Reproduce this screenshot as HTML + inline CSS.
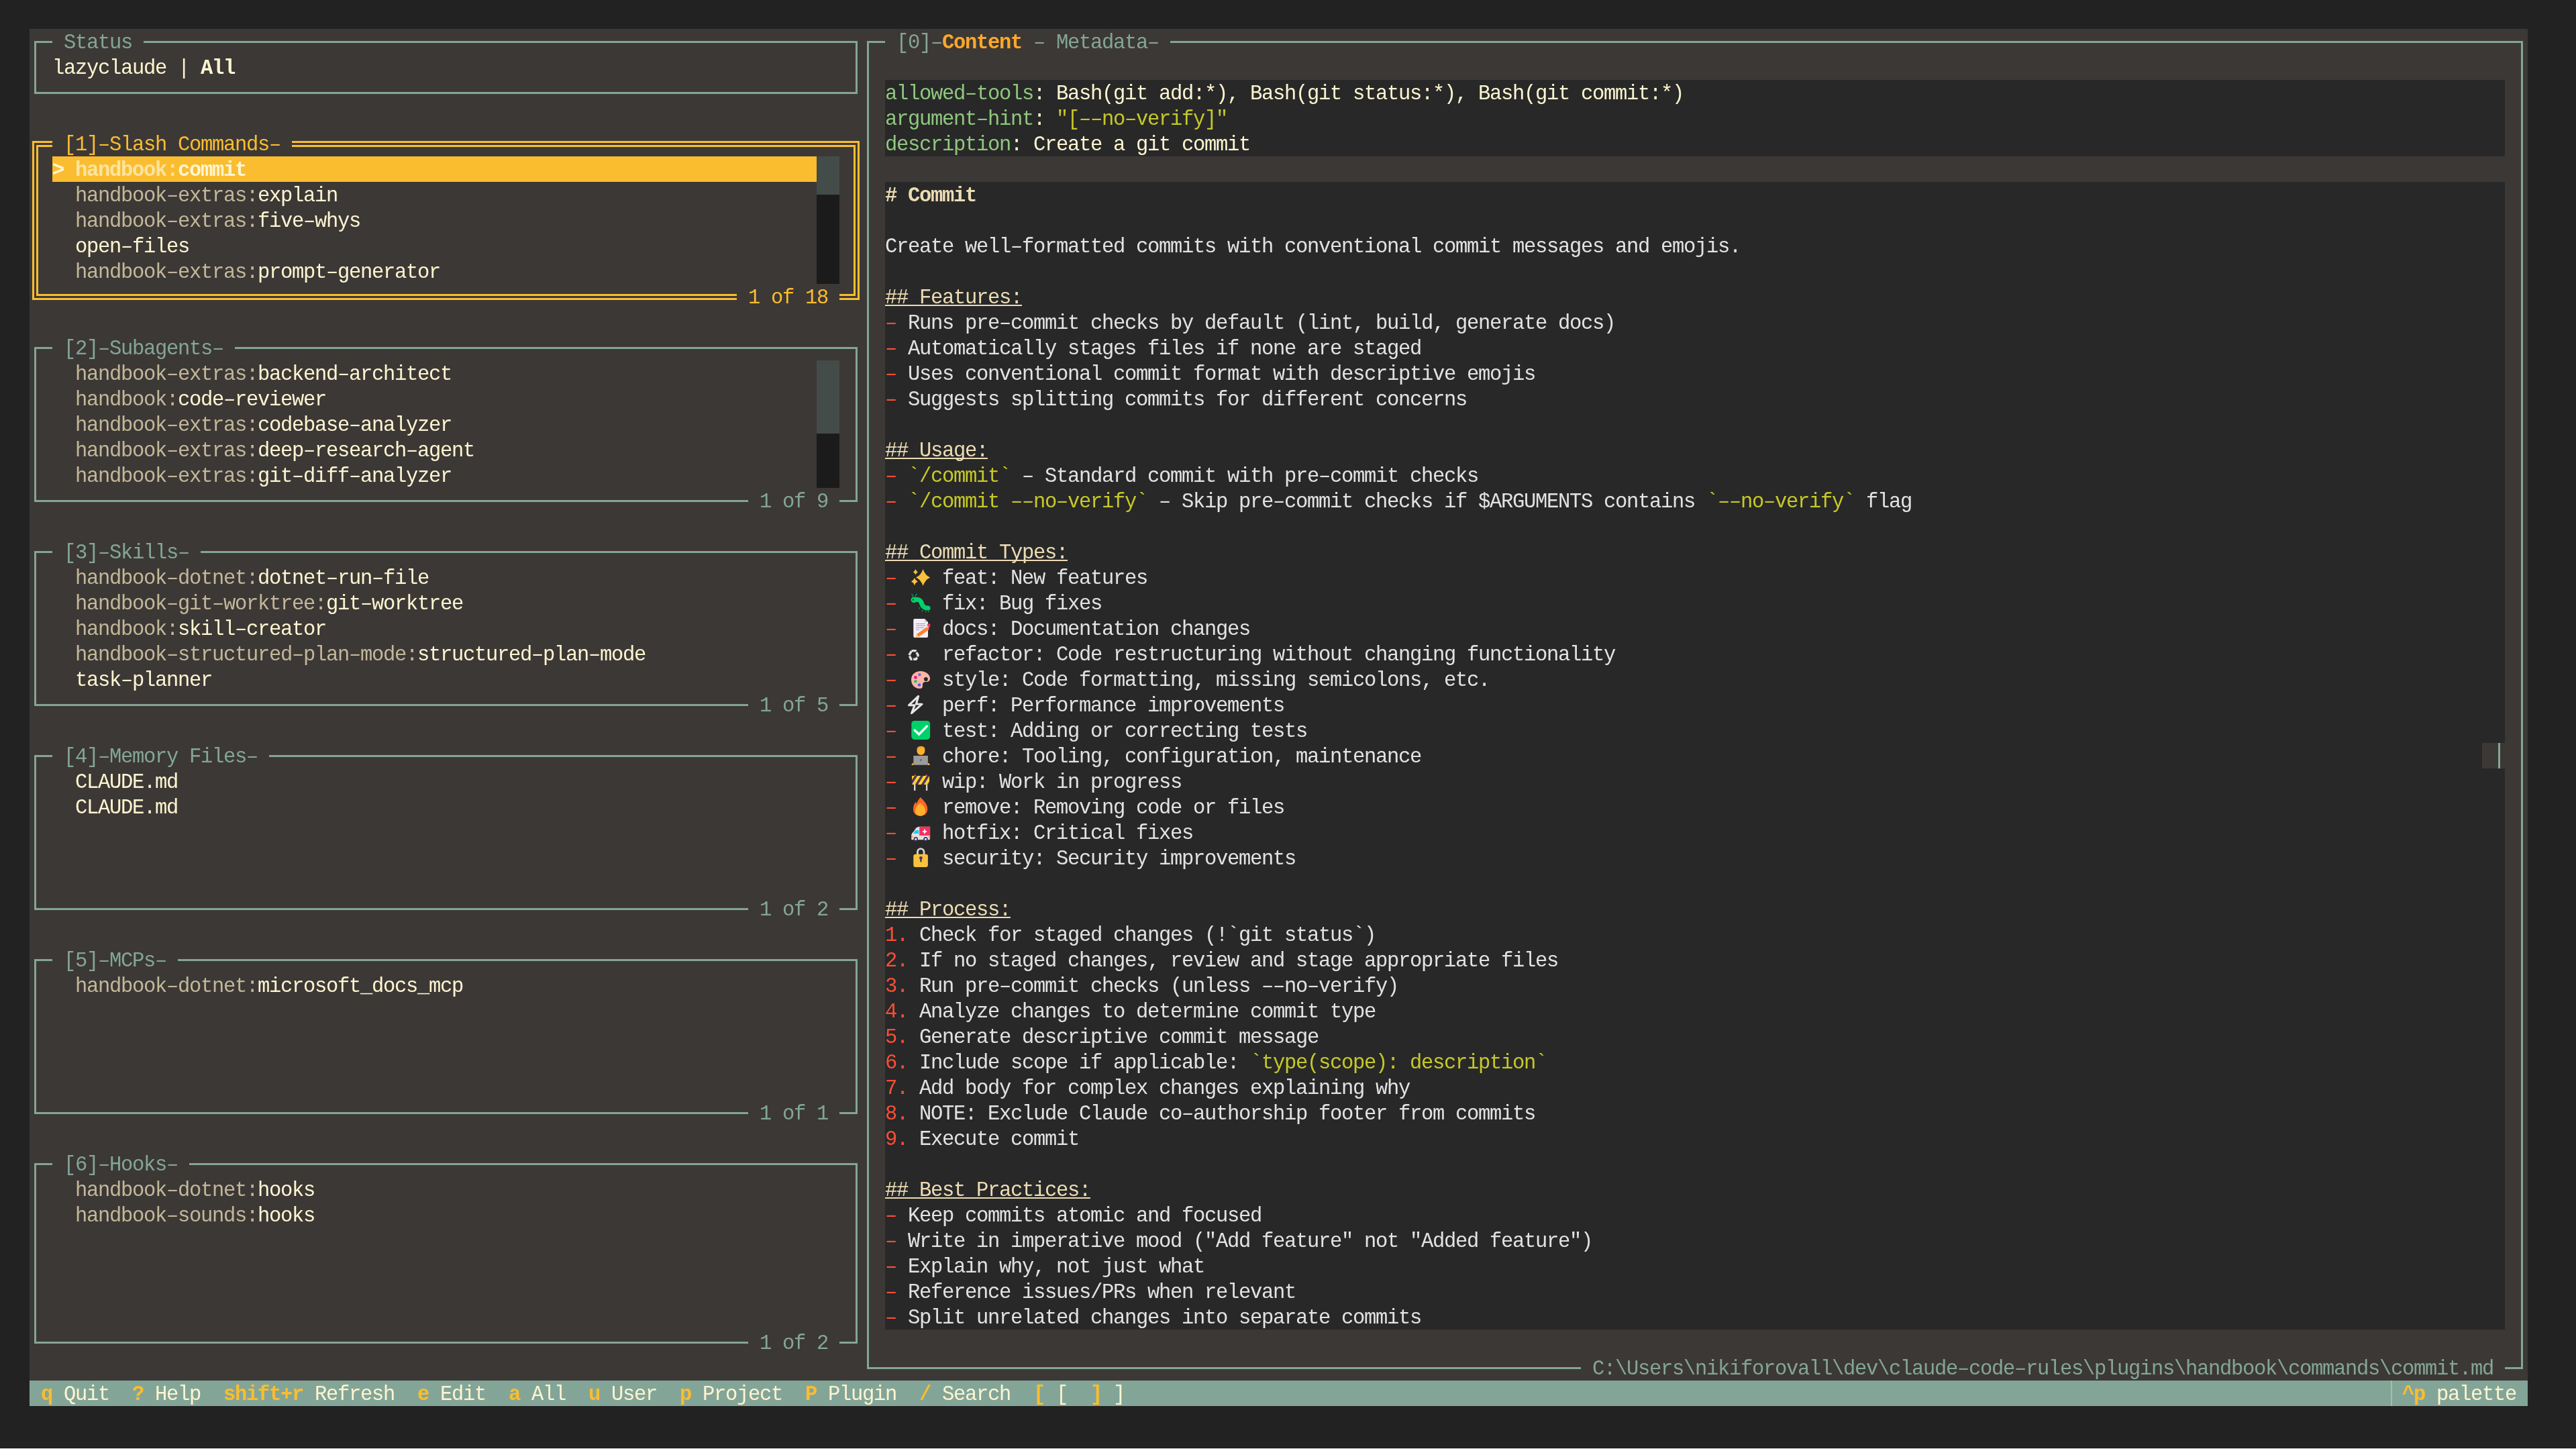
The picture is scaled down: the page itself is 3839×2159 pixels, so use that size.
<!DOCTYPE html>
<html><head><meta charset="utf-8"><style>
html,body{margin:0;padding:0;}
body{width:3839px;height:2159px;background:#222222;position:relative;overflow:hidden;}
div,span,svg{position:absolute;}
.t{will-change:transform;white-space:pre;font-family:"Liberation Mono";font-size:30.5px;line-height:38px;letter-spacing:-1.3027px;}
.b{font-weight:bold;}
</style></head><body>
<div style="left:44px;top:43px;width:3723px;height:2052px;background:#3c3836"></div>
<div style="left:51px;top:61px;width:1221px;height:73px;border:3px solid #83a598"></div>
<div style="left:78px;top:53px;width:136px;height:20px;background:#3c3836"></div>
<span class="t" style="left:95px;top:45px;color:#83a598">Status</span>
<span class="t" style="left:78px;top:83px;color:#fdf5d0">lazyclaude | </span>
<span class="t b" style="left:299px;top:83px;color:#fdf5d0">All</span>
<div style="left:48px;top:210px;width:1227px;height:231px;border:3px solid #fabd2f"></div>
<div style="left:54px;top:216px;width:1215px;height:219px;border:3px solid #fabd2f"></div>
<div style="left:78px;top:205px;width:357px;height:20px;background:#3c3836"></div>
<span class="t" style="left:95px;top:197px;color:#fabd2f">[1]–Slash Commands–</span>
<div style="left:1098px;top:433px;width:153px;height:20px;background:#3c3836"></div>
<span class="t" style="left:1115px;top:425px;color:#fabd2f">1 of 18</span>
<div style="left:78px;top:233px;width:1139px;height:38px;background:#fabd2f"></div>
<div style="left:1217px;top:233px;width:34px;height:190px;background:#1b1b1b"></div>
<div style="left:1217px;top:233px;width:34px;height:57px;background:#434c48"></div>
<span class="t b" style="left:78px;top:235px;color:#fdf5d0">&gt;</span>
<span class="t b" style="left:112px;top:235px;color:#fbe4a0">handbook:</span>
<span class="t b" style="left:265px;top:235px;color:#fdf5d0">commit</span>
<span class="t" style="left:112px;top:273px;color:#c2b798">handbook–extras:</span>
<span class="t" style="left:384px;top:273px;color:#fdf5d0">explain</span>
<span class="t" style="left:112px;top:311px;color:#c2b798">handbook–extras:</span>
<span class="t" style="left:384px;top:311px;color:#fdf5d0">five–whys</span>
<span class="t" style="left:112px;top:349px;color:#fdf5d0">open–files</span>
<span class="t" style="left:112px;top:387px;color:#c2b798">handbook–extras:</span>
<span class="t" style="left:384px;top:387px;color:#fdf5d0">prompt–generator</span>
<div style="left:51px;top:517px;width:1221px;height:225px;border:3px solid #83a598"></div>
<div style="left:78px;top:509px;width:272px;height:20px;background:#3c3836"></div>
<span class="t" style="left:95px;top:501px;color:#83a598">[2]–Subagents–</span>
<div style="left:1115px;top:737px;width:136px;height:20px;background:#3c3836"></div>
<span class="t" style="left:1132px;top:729px;color:#83a598">1 of 9</span>
<div style="left:1217px;top:537px;width:34px;height:190px;background:#1b1b1b"></div>
<div style="left:1217px;top:537px;width:34px;height:109px;background:#434c48"></div>
<span class="t" style="left:112px;top:539px;color:#c2b798">handbook–extras:</span>
<span class="t" style="left:384px;top:539px;color:#fdf5d0">backend–architect</span>
<span class="t" style="left:112px;top:577px;color:#c2b798">handbook:</span>
<span class="t" style="left:265px;top:577px;color:#fdf5d0">code–reviewer</span>
<span class="t" style="left:112px;top:615px;color:#c2b798">handbook–extras:</span>
<span class="t" style="left:384px;top:615px;color:#fdf5d0">codebase–analyzer</span>
<span class="t" style="left:112px;top:653px;color:#c2b798">handbook–extras:</span>
<span class="t" style="left:384px;top:653px;color:#fdf5d0">deep–research–agent</span>
<span class="t" style="left:112px;top:691px;color:#c2b798">handbook–extras:</span>
<span class="t" style="left:384px;top:691px;color:#fdf5d0">git–diff–analyzer</span>
<div style="left:51px;top:821px;width:1221px;height:225px;border:3px solid #83a598"></div>
<div style="left:78px;top:813px;width:221px;height:20px;background:#3c3836"></div>
<span class="t" style="left:95px;top:805px;color:#83a598">[3]–Skills–</span>
<div style="left:1115px;top:1041px;width:136px;height:20px;background:#3c3836"></div>
<span class="t" style="left:1132px;top:1033px;color:#83a598">1 of 5</span>
<span class="t" style="left:112px;top:843px;color:#c2b798">handbook–dotnet:</span>
<span class="t" style="left:384px;top:843px;color:#fdf5d0">dotnet–run–file</span>
<span class="t" style="left:112px;top:881px;color:#c2b798">handbook–git–worktree:</span>
<span class="t" style="left:486px;top:881px;color:#fdf5d0">git–worktree</span>
<span class="t" style="left:112px;top:919px;color:#c2b798">handbook:</span>
<span class="t" style="left:265px;top:919px;color:#fdf5d0">skill–creator</span>
<span class="t" style="left:112px;top:957px;color:#c2b798">handbook–structured–plan–mode:</span>
<span class="t" style="left:622px;top:957px;color:#fdf5d0">structured–plan–mode</span>
<span class="t" style="left:112px;top:995px;color:#fdf5d0">task–planner</span>
<div style="left:51px;top:1125px;width:1221px;height:225px;border:3px solid #83a598"></div>
<div style="left:78px;top:1117px;width:323px;height:20px;background:#3c3836"></div>
<span class="t" style="left:95px;top:1109px;color:#83a598">[4]–Memory Files–</span>
<div style="left:1115px;top:1345px;width:136px;height:20px;background:#3c3836"></div>
<span class="t" style="left:1132px;top:1337px;color:#83a598">1 of 2</span>
<span class="t" style="left:112px;top:1147px;color:#fdf5d0">CLAUDE.md</span>
<span class="t" style="left:112px;top:1185px;color:#fdf5d0">CLAUDE.md</span>
<div style="left:51px;top:1429px;width:1221px;height:225px;border:3px solid #83a598"></div>
<div style="left:78px;top:1421px;width:187px;height:20px;background:#3c3836"></div>
<span class="t" style="left:95px;top:1413px;color:#83a598">[5]–MCPs–</span>
<div style="left:1115px;top:1649px;width:136px;height:20px;background:#3c3836"></div>
<span class="t" style="left:1132px;top:1641px;color:#83a598">1 of 1</span>
<span class="t" style="left:112px;top:1451px;color:#c2b798">handbook–dotnet:</span>
<span class="t" style="left:384px;top:1451px;color:#fdf5d0">microsoft_docs_mcp</span>
<div style="left:51px;top:1733px;width:1221px;height:263px;border:3px solid #83a598"></div>
<div style="left:78px;top:1725px;width:204px;height:20px;background:#3c3836"></div>
<span class="t" style="left:95px;top:1717px;color:#83a598">[6]–Hooks–</span>
<div style="left:1115px;top:1991px;width:136px;height:20px;background:#3c3836"></div>
<span class="t" style="left:1132px;top:1983px;color:#83a598">1 of 2</span>
<span class="t" style="left:112px;top:1755px;color:#c2b798">handbook–dotnet:</span>
<span class="t" style="left:384px;top:1755px;color:#fdf5d0">hooks</span>
<span class="t" style="left:112px;top:1793px;color:#c2b798">handbook–sounds:</span>
<span class="t" style="left:384px;top:1793px;color:#fdf5d0">hooks</span>
<div style="left:1292px;top:61px;width:2462px;height:1973px;border:3px solid #83a598"></div>
<div style="left:1319px;top:53px;width:425px;height:20px;background:#3c3836"></div>
<span class="t" style="left:1336px;top:45px;color:#83a598">[0]–</span>
<span class="t b" style="left:1404px;top:45px;color:#fda82a">Content</span>
<span class="t" style="left:1523px;top:45px;color:#83a598"> – Metadata–</span>
<div style="left:2356px;top:2029px;width:1377px;height:20px;background:#3c3836"></div>
<span class="t" style="left:2373px;top:2021px;color:#83a598">C:\Users\nikiforovall\dev\claude–code–rules\plugins\handbook\commands\commit.md</span>
<div style="left:1319px;top:119px;width:2414px;height:114px;background:#282828"></div>
<div style="left:1319px;top:271px;width:2414px;height:1710px;background:#282828"></div>
<div style="left:3699px;top:1107px;width:34px;height:38px;background:#3c3836"></div>
<div style="left:3723px;top:1107px;width:3px;height:38px;background:#83a598"></div>
<span class="t" style="left:1319px;top:121px;color:#8fc77e">allowed–tools</span>
<span class="t" style="left:1540px;top:121px;color:#fdf5d0">: Bash(git add:*), Bash(git status:*), Bash(git commit:*)</span>
<span class="t" style="left:1319px;top:159px;color:#8fc77e">argument–hint</span>
<span class="t" style="left:1540px;top:159px;color:#fdf5d0">: </span>
<span class="t" style="left:1574px;top:159px;color:#c6c828">&quot;[––no–verify]&quot;</span>
<span class="t" style="left:1319px;top:197px;color:#8fc77e">description</span>
<span class="t" style="left:1506px;top:197px;color:#fdf5d0">: Create a git commit</span>
<span class="t b" style="left:1319px;top:273px;color:#ecdcb4"># Commit</span>
<span class="t" style="left:1319px;top:349px;color:#e2e2e2">Create well–formatted commits with conventional commit messages and emojis.</span>
<span class="t" style="left:1319px;top:425px;color:#ecdcb4">## Features:</span>
<div style="left:1319px;top:454px;width:204px;height:1.5px;background:#ecdcb4"></div>
<span class="t" style="left:1319px;top:463px;color:#fb4e36">– </span>
<span class="t" style="left:1353px;top:463px;color:#e2e2e2">Runs pre–commit checks by default (lint, build, generate docs)</span>
<span class="t" style="left:1319px;top:501px;color:#fb4e36">– </span>
<span class="t" style="left:1353px;top:501px;color:#e2e2e2">Automatically stages files if none are staged</span>
<span class="t" style="left:1319px;top:539px;color:#fb4e36">– </span>
<span class="t" style="left:1353px;top:539px;color:#e2e2e2">Uses conventional commit format with descriptive emojis</span>
<span class="t" style="left:1319px;top:577px;color:#fb4e36">– </span>
<span class="t" style="left:1353px;top:577px;color:#e2e2e2">Suggests splitting commits for different concerns</span>
<span class="t" style="left:1319px;top:653px;color:#ecdcb4">## Usage:</span>
<div style="left:1319px;top:682px;width:153px;height:1.5px;background:#ecdcb4"></div>
<span class="t" style="left:1319px;top:691px;color:#fb4e36">– </span>
<span class="t" style="left:1353px;top:691px;color:#c6c828">`/commit`</span>
<span class="t" style="left:1506px;top:691px;color:#e2e2e2"> – Standard commit with pre–commit checks</span>
<span class="t" style="left:1319px;top:729px;color:#fb4e36">– </span>
<span class="t" style="left:1353px;top:729px;color:#c6c828">`/commit ––no–verify`</span>
<span class="t" style="left:1710px;top:729px;color:#e2e2e2"> – Skip pre–commit checks if $ARGUMENTS contains </span>
<span class="t" style="left:2543px;top:729px;color:#c6c828">`––no–verify`</span>
<span class="t" style="left:2764px;top:729px;color:#e2e2e2"> flag</span>
<span class="t" style="left:1319px;top:805px;color:#ecdcb4">## Commit Types:</span>
<div style="left:1319px;top:834px;width:272px;height:1.5px;background:#ecdcb4"></div>
<span class="t" style="left:1319px;top:843px;color:#fb4e36">– </span>
<span class="t" style="left:1404px;top:843px;color:#e2e2e2">feat: New features</span>
<span class="t" style="left:1319px;top:881px;color:#fb4e36">– </span>
<span class="t" style="left:1404px;top:881px;color:#e2e2e2">fix: Bug fixes</span>
<span class="t" style="left:1319px;top:919px;color:#fb4e36">– </span>
<span class="t" style="left:1404px;top:919px;color:#e2e2e2">docs: Documentation changes</span>
<span class="t" style="left:1319px;top:957px;color:#fb4e36">– </span>
<span class="t" style="left:1404px;top:957px;color:#e2e2e2">refactor: Code restructuring without changing functionality</span>
<span class="t" style="left:1319px;top:995px;color:#fb4e36">– </span>
<span class="t" style="left:1404px;top:995px;color:#e2e2e2">style: Code formatting, missing semicolons, etc.</span>
<span class="t" style="left:1319px;top:1033px;color:#fb4e36">– </span>
<span class="t" style="left:1404px;top:1033px;color:#e2e2e2">perf: Performance improvements</span>
<span class="t" style="left:1319px;top:1071px;color:#fb4e36">– </span>
<span class="t" style="left:1404px;top:1071px;color:#e2e2e2">test: Adding or correcting tests</span>
<span class="t" style="left:1319px;top:1109px;color:#fb4e36">– </span>
<span class="t" style="left:1404px;top:1109px;color:#e2e2e2">chore: Tooling, configuration, maintenance</span>
<span class="t" style="left:1319px;top:1147px;color:#fb4e36">– </span>
<span class="t" style="left:1404px;top:1147px;color:#e2e2e2">wip: Work in progress</span>
<span class="t" style="left:1319px;top:1185px;color:#fb4e36">– </span>
<span class="t" style="left:1404px;top:1185px;color:#e2e2e2">remove: Removing code or files</span>
<span class="t" style="left:1319px;top:1223px;color:#fb4e36">– </span>
<span class="t" style="left:1404px;top:1223px;color:#e2e2e2">hotfix: Critical fixes</span>
<span class="t" style="left:1319px;top:1261px;color:#fb4e36">– </span>
<span class="t" style="left:1404px;top:1261px;color:#e2e2e2">security: Security improvements</span>
<span class="t" style="left:1319px;top:1337px;color:#ecdcb4">## Process:</span>
<div style="left:1319px;top:1366px;width:187px;height:1.5px;background:#ecdcb4"></div>
<span class="t" style="left:1319px;top:1375px;color:#fb4e36">1. </span>
<span class="t" style="left:1370px;top:1375px;color:#e2e2e2">Check for staged changes (!`git status`)</span>
<span class="t" style="left:1319px;top:1413px;color:#fb4e36">2. </span>
<span class="t" style="left:1370px;top:1413px;color:#e2e2e2">If no staged changes, review and stage appropriate files</span>
<span class="t" style="left:1319px;top:1451px;color:#fb4e36">3. </span>
<span class="t" style="left:1370px;top:1451px;color:#e2e2e2">Run pre–commit checks (unless ––no–verify)</span>
<span class="t" style="left:1319px;top:1489px;color:#fb4e36">4. </span>
<span class="t" style="left:1370px;top:1489px;color:#e2e2e2">Analyze changes to determine commit type</span>
<span class="t" style="left:1319px;top:1527px;color:#fb4e36">5. </span>
<span class="t" style="left:1370px;top:1527px;color:#e2e2e2">Generate descriptive commit message</span>
<span class="t" style="left:1319px;top:1565px;color:#fb4e36">6. </span>
<span class="t" style="left:1370px;top:1565px;color:#e2e2e2">Include scope if applicable: </span>
<span class="t" style="left:1863px;top:1565px;color:#c6c828">`type(scope): description`</span>
<span class="t" style="left:1319px;top:1603px;color:#fb4e36">7. </span>
<span class="t" style="left:1370px;top:1603px;color:#e2e2e2">Add body for complex changes explaining why</span>
<span class="t" style="left:1319px;top:1641px;color:#fb4e36">8. </span>
<span class="t" style="left:1370px;top:1641px;color:#e2e2e2">NOTE: Exclude Claude co–authorship footer from commits</span>
<span class="t" style="left:1319px;top:1679px;color:#fb4e36">9. </span>
<span class="t" style="left:1370px;top:1679px;color:#e2e2e2">Execute commit</span>
<span class="t" style="left:1319px;top:1755px;color:#ecdcb4">## Best Practices:</span>
<div style="left:1319px;top:1784px;width:306px;height:1.5px;background:#ecdcb4"></div>
<span class="t" style="left:1319px;top:1793px;color:#fb4e36">– </span>
<span class="t" style="left:1353px;top:1793px;color:#e2e2e2">Keep commits atomic and focused</span>
<span class="t" style="left:1319px;top:1831px;color:#fb4e36">– </span>
<span class="t" style="left:1353px;top:1831px;color:#e2e2e2">Write in imperative mood (&quot;Add feature&quot; not &quot;Added feature&quot;)</span>
<span class="t" style="left:1319px;top:1869px;color:#fb4e36">– </span>
<span class="t" style="left:1353px;top:1869px;color:#e2e2e2">Explain why, not just what</span>
<span class="t" style="left:1319px;top:1907px;color:#fb4e36">– </span>
<span class="t" style="left:1353px;top:1907px;color:#e2e2e2">Reference issues/PRs when relevant</span>
<span class="t" style="left:1319px;top:1945px;color:#fb4e36">– </span>
<span class="t" style="left:1353px;top:1945px;color:#e2e2e2">Split unrelated changes into separate commits</span>
<svg style="left:1353px;top:841px" width="34" height="38" viewBox="0 0 34 38"><path d="M22.6 7.0 Q25.540000000000003 16.0 33.1 19.5 Q25.540000000000003 23.0 22.6 32.0 Q19.66 23.0 12.100000000000001 19.5 Q19.66 16.0 22.6 7.0 Z" fill="#f9c23c"/><path d="M11.4 7.1000000000000005 Q12.408000000000001 10.124 15.0 11.3 Q12.408000000000001 12.476 11.4 15.5 Q10.392 12.476 7.800000000000001 11.3 Q10.392 10.124 11.4 7.1000000000000005 Z" fill="#f9c23c"/><path d="M9.9 20.0 Q11.272 24.032 14.8 25.6 Q11.272 27.168000000000003 9.9 31.200000000000003 Q8.528 27.168000000000003 5.0 25.6 Q8.528 24.032 9.9 20.0 Z" fill="#f9c23c"/></svg>
<svg style="left:1353px;top:879px" width="34" height="38" viewBox="0 0 34 38"><path d="M7 10 Q8 7 5 6 M11 10 Q11 7 14 6" stroke="#00a86b" stroke-width="1.2" fill="none"/><path d="M9.5 15 C15 13 19 15 20.5 20 C22 25 24 27 30 27" stroke="#00d26a" stroke-width="7" stroke-linecap="round" fill="none"/><circle cx="8.8" cy="14.8" r="4.2" fill="#00d26a"/><ellipse cx="8" cy="14.6" rx="1" ry="1.4" fill="#1c1c1c"/><path d="M18 26 l-1 2 M22 30 l-1 2 M27 31 l0 2 M31 31 l0 2" stroke="#00a86b" stroke-width="1.3"/></svg>
<svg style="left:1353px;top:917px" width="34" height="38" viewBox="0 0 34 38"><path d="M10 5 H25 L30 10 V31 Q30 33 28 33 H10 Q8.3 33 8.3 31 V7 Q8.3 5 10 5 Z" fill="#f3eef8"/><path d="M25 5 L30 10 H26 Q25 10 25 9 Z" fill="#cac3d3"/><path d="M12 12.5 H26 M12 15.3 H26 M12 18.4 H24 M12 21.2 H17" stroke="#998ea4" stroke-width="0.9"/><path d="M14.5 30 L30.5 18.6" stroke="#ff822d" stroke-width="5.2"/><path d="M29.6 19.2 L32.6 17 L30.2 13.8 L27.2 16" fill="#d3d3d3"/><path d="M31 17.6 L33.6 15.7 Q34 13.6 32.6 12.5 Q31.2 11.6 29.6 12.8 L28.4 13.7 Z" fill="#f92f60"/><path d="M16.2 32.1 L12.9 27.9 L11.2 32.6 Q11 33.5 11.9 33.3 Z" fill="#ffce7c"/></svg>
<svg style="left:1353px;top:955px" width="34" height="38" viewBox="0 0 34 38"><path d="M5.6 14.6 H11.4 L15.2 21.2 L12.2 27.2 H4.8 L1.8 21.2 Z" fill="none" stroke="#e0e0e0" stroke-width="3.4" stroke-linejoin="round" stroke-dasharray="7 1.6"/></svg>
<svg style="left:1353px;top:993px" width="34" height="38" viewBox="0 0 34 38"><path d="M19 7 C27 7 33 12 33 18 C33 22 30 23 27 23 C24 23 22 24 22 27 C22 30 22 33 18 33 C10 33 5 27 5 20 C5 12 11 7 19 7 Z" fill="#ffb4a8"/><circle cx="26.9" cy="19" r="2.9" fill="#262626"/><circle cx="17.4" cy="12.2" r="2.3" fill="#8d65c5"/><circle cx="11.4" cy="16.4" r="2.3" fill="#f70a8d"/><circle cx="11.4" cy="22.3" r="2.3" fill="#00d26a"/><circle cx="17" cy="27.5" r="2.3" fill="#3f5fff"/></svg>
<svg style="left:1353px;top:1031px" width="34" height="38" viewBox="0 0 34 38"><path d="M15.6 6.4 L1.4 19.8 L10.2 19.8 L5.6 31.6 L21 18.2 L12.4 18 Z" fill="none" stroke="#e6e6e6" stroke-width="3.1" stroke-linejoin="round"/></svg>
<svg style="left:1353px;top:1069px" width="34" height="38" viewBox="0 0 34 38"><rect x="5.3" y="4.9" width="27.8" height="28" rx="4.5" fill="#00d26a"/><path d="M10.1 19 L16.6 25.2 L28.3 13.1" stroke="#ffffff" stroke-width="3.4" stroke-linecap="round" fill="none"/></svg>
<svg style="left:1353px;top:1107px" width="34" height="38" viewBox="0 0 34 38"><circle cx="19.4" cy="12" r="6" fill="#ffb02e"/><path d="M13.5 11 Q13 4.8 19.5 4.8 Q26 4.8 25.5 11 Q24 8 19.5 8 Q15 8 13.5 11 Z" fill="#f9a825"/><rect x="8.3" y="19" width="21.6" height="13.8" fill="#9b9b9b"/><rect x="18.5" y="24" width="1.8" height="3" fill="#6b4a8a"/><path d="M5.2 33 Q6 30 8.3 29.5 V33 Z M33.1 33 Q32.3 30 29.9 29.5 V33 Z" fill="#ffb02e"/></svg>
<svg style="left:1353px;top:1145px" width="34" height="38" viewBox="0 0 34 38"><rect x="9" y="24" width="2.4" height="9" fill="#d4d4d4"/><rect x="26.9" y="24" width="2.4" height="9" fill="#d4d4d4"/><circle cx="10.7" cy="10.6" r="1.6" fill="#f8312f"/><circle cx="27.5" cy="10.6" r="1.6" fill="#f8312f"/><clipPath id="cb"><rect x="6.1" y="10.9" width="26" height="13.1"/></clipPath><g clip-path="url(#cb)"><rect x="6.1" y="10.9" width="26" height="13.1" fill="#ffd524"/><path d="M2 27 L14 8 M11 27 L23 8 M20 27 L32 8 M29 27 L41 8" stroke="#533566" stroke-width="3.6"/></g></svg>
<svg style="left:1353px;top:1183px" width="34" height="38" viewBox="0 0 34 38"><path d="M19 4.9 C23 9 29.3 15 29.3 22.5 C29.3 28.5 25 32.9 18.6 32.9 C12.2 32.9 7.9 28.5 7.9 22.5 C7.9 17.5 10 14 11.6 11.8 L12.6 15 C14 11 16 8 19 4.9 Z" fill="#ff6723"/><path d="M18.6 13.1 C22 16.5 26.1 20.5 26.1 25.3 C26.1 29.5 22.8 32.5 18.6 32.5 C14.4 32.5 11 29.5 11 25.3 C11 20.5 15 16.5 18.6 13.1 Z" fill="#ffb02e"/></svg>
<svg style="left:1353px;top:1221px" width="34" height="38" viewBox="0 0 34 38"><path d="M10 16 Q12 11 17 10.8 H33.1 V28.5 Q33.1 30.3 31.5 30.3 H6.6 Q5.1 30.3 5.1 28.8 V24 Q5.1 21 8 18.5 Z" fill="#e1e1e1"/><rect x="17.2" y="10.8" width="15.9" height="13.1" fill="#f92f60"/><path d="M25 14.8 V21 M21.9 17.9 H28.1" stroke="#ffffff" stroke-width="2"/><path d="M8.3 21.1 L10.5 16.6 Q11.5 16 13 16 H16.2 V21.1 Z" fill="#26c9fc"/><rect x="5.1" y="24.5" width="2" height="3" fill="#ff822d"/><rect x="31.3" y="24.8" width="1.8" height="3" fill="#ff822d"/><circle cx="11.8" cy="29.3" r="3.2" fill="#433b6b"/><circle cx="11.8" cy="29.3" r="1.4" fill="#fff"/><circle cx="26.5" cy="29.3" r="3.2" fill="#433b6b"/><circle cx="26.5" cy="29.3" r="1.4" fill="#fff"/></svg>
<svg style="left:1353px;top:1259px" width="34" height="38" viewBox="0 0 34 38"><path d="M14.4 14 V10.5 A4.8 4.8 0 0 1 24 10.5 V14" stroke="#d3d3d3" stroke-width="2.8" fill="none"/><rect x="8.3" y="13.7" width="21.6" height="19.4" rx="3" fill="#f9c23c"/><circle cx="19.4" cy="19.3" r="2.4" fill="#433b6b"/><rect x="18.2" y="19.5" width="2.4" height="6" rx="1.2" fill="#433b6b"/></svg>
<div style="left:44px;top:2057px;width:3723px;height:38px;background:#83a598"></div>
<span class="t b" style="left:61px;top:2059px;color:#fabd2f">q</span>
<span class="t" style="left:95px;top:2059px;color:#fdf5d0">Quit</span>
<span class="t b" style="left:197px;top:2059px;color:#fabd2f">?</span>
<span class="t" style="left:231px;top:2059px;color:#fdf5d0">Help</span>
<span class="t b" style="left:333px;top:2059px;color:#fabd2f">shift+r</span>
<span class="t" style="left:469px;top:2059px;color:#fdf5d0">Refresh</span>
<span class="t b" style="left:622px;top:2059px;color:#fabd2f">e</span>
<span class="t" style="left:656px;top:2059px;color:#fdf5d0">Edit</span>
<span class="t b" style="left:758px;top:2059px;color:#fabd2f">a</span>
<span class="t" style="left:792px;top:2059px;color:#fdf5d0">All</span>
<span class="t b" style="left:877px;top:2059px;color:#fabd2f">u</span>
<span class="t" style="left:911px;top:2059px;color:#fdf5d0">User</span>
<span class="t b" style="left:1013px;top:2059px;color:#fabd2f">p</span>
<span class="t" style="left:1047px;top:2059px;color:#fdf5d0">Project</span>
<span class="t b" style="left:1200px;top:2059px;color:#fabd2f">P</span>
<span class="t" style="left:1234px;top:2059px;color:#fdf5d0">Plugin</span>
<span class="t b" style="left:1370px;top:2059px;color:#fabd2f">/</span>
<span class="t" style="left:1404px;top:2059px;color:#fdf5d0">Search</span>
<span class="t b" style="left:1540px;top:2059px;color:#fabd2f">[</span>
<span class="t" style="left:1574px;top:2059px;color:#fdf5d0">[</span>
<span class="t b" style="left:1625px;top:2059px;color:#fabd2f">]</span>
<span class="t" style="left:1659px;top:2059px;color:#fdf5d0">]</span>
<div style="left:3563px;top:2057px;width:2px;height:38px;background:#a7bdae"></div>
<span class="t b" style="left:3580px;top:2059px;color:#fabd2f">^p</span>
<span class="t" style="left:3614px;top:2059px;color:#fdf5d0"> palette</span>
<div style="left:0px;top:2157px;width:3839px;height:1px;background:#161616"></div>
<div style="left:0px;top:2158px;width:3839px;height:1px;background:#f0f0f0"></div>
</body></html>
